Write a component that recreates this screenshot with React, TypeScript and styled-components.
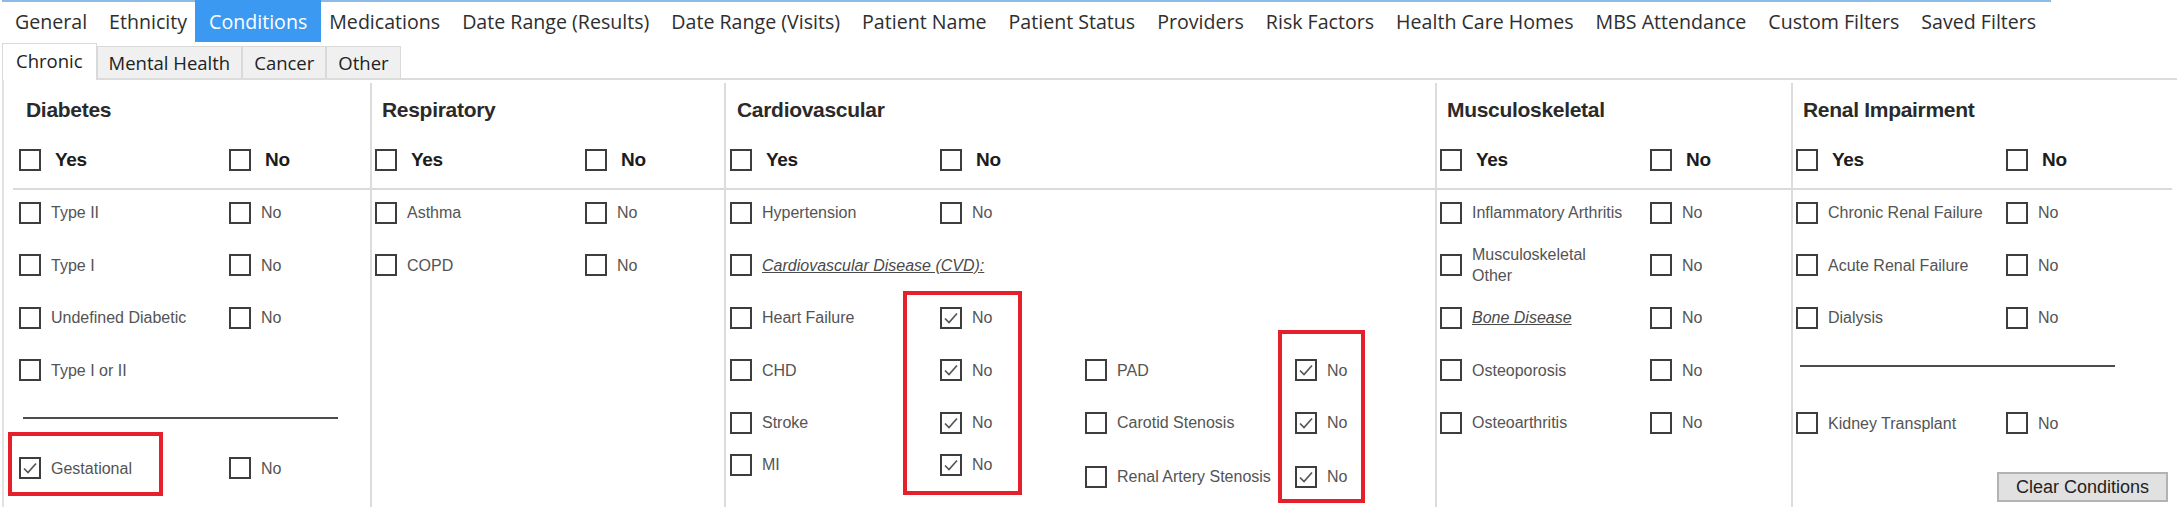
import React from 'react';
import styled, { createGlobalStyle } from 'styled-components';

const GlobalStyle = createGlobalStyle`
  html, body {
    margin: 0;
    padding: 0;
    background: #fff;
  }
  * {
    box-sizing: border-box;
  }
`;

const Screen = styled.div`
  width: 2177px;
  height: 507px;
  overflow: hidden;
  background: #fff;
  padding-left: 2px;
  font-family: 'Liberation Sans', Arial, sans-serif;
`;

const TopTabs = styled.div`
  display: flex;
  width: 2049px;
  height: 42px;
  padding-left: 2px;
  border-top: 2px solid #8cbbe8;
  font-family: 'Open Sans', 'Noto Sans', sans-serif;
  font-size: 19.6px;
  color: #2e2e2e;
`;

const TopTab = styled.div<{ $active?: boolean }>`
  flex: none;
  padding: 0 11px;
  line-height: 40px;
  white-space: nowrap;
  ${({ $active }) =>
    $active &&
    `
    background: #3b99f2;
    color: #fff;
    margin: -2px -3px 0;
    padding: 2px 14px 0;
    height: 42px;
  `}
`;

const SubTabs = styled.div`
  display: flex;
  align-items: flex-end;
  height: 36px;
  font-family: 'Open Sans', 'Noto Sans', sans-serif;
  font-size: 18.5px;
  color: #222;
`;

const SubTab = styled.div<{ $active?: boolean }>`
  position: relative;
  z-index: 1;
  height: ${({ $active }) => ($active ? '37px' : '32px')};
  margin-bottom: ${({ $active }) => ($active ? '-2px' : '0')};
  padding: 0 ${({ $active }) => ($active ? '13px' : '11px')};
  line-height: ${({ $active }) => ($active ? '34px' : '31px')};
  border: 1px solid #d9d9d9;
  border-bottom: none;
  background: ${({ $active }) => ($active ? '#fff' : '#f0f0f0')};
  white-space: nowrap;
`;

const TabPage = styled.div`
  display: flex;
  height: 430px;
  padding-top: 3px;
  border-top: 2px solid #dcdcdc;
  border-left: 2px solid #e2e2e2;
`;

const Panel = styled.section<{ $width?: number; $inset: number; $first?: boolean }>`
  --inset: ${({ $inset }) => $inset}px;
  position: relative;
  display: flex;
  flex-direction: column;
  min-width: 0;
  ${({ $width }) => ($width ? `width: ${$width}px; flex: none;` : 'flex: 1;')}
  border-left: ${({ $first }) => ($first ? 'none' : '2px solid #dcdcdc')};
`;

const Heading = styled.div`
  height: 48px;
  padding: 6px 0 0 calc(var(--inset) + 7px);
  line-height: 42px;
  font-weight: bold;
  font-size: 21px;
  letter-spacing: -0.3px;
  color: #2a2a2a;
  white-space: nowrap;
`;

const YesNoRow = styled.div<{ $lineStart?: number; $lineEnd?: number }>`
  display: flex;
  align-items: center;
  height: 59px;
  margin-left: ${({ $lineStart = 0 }) => $lineStart}px;
  margin-right: ${({ $lineEnd = 0 }) => $lineEnd}px;
  padding-left: calc(var(--inset) - ${({ $lineStart = 0 }) => $lineStart}px);
  border-bottom: 2px solid #dadada;
`;

const HeaderOption = styled.label<{ $wide?: boolean }>`
  display: flex;
  align-items: center;
  flex: none;
  gap: 14px;
  width: ${({ $wide }) => ($wide ? '210px' : 'auto')};
  font-weight: bold;
  font-size: 19px;
  letter-spacing: -0.3px;
  color: #1c1c1c;
`;

const Row = styled.div<{ $h?: number }>`
  display: flex;
  align-items: flex-start;
  height: ${({ $h = 52.5 }) => $h}px;
  padding-left: var(--inset);
  flex: none;
`;

const Option = styled.label<{ $wide?: boolean }>`
  display: flex;
  align-items: center;
  flex: none;
  gap: 10px;
  width: ${({ $wide }) => ($wide ? '210px' : 'auto')};
  height: 45px;
  font-size: 16px;
  line-height: 21px;
  color: #545454;
  white-space: nowrap;
`;

const LinkText = styled.span`
  font-style: italic;
  text-decoration: underline;
  color: #4a4a4a;
`;

const Box = styled.span`
  display: grid;
  place-items: center;
  flex: none;
  width: 22px;
  height: 22px;
  border: 2px solid #3d3d3d;
  background: #fff;
`;

const Divider = styled.div<{ $left: number; $top: number; $bottom: number }>`
  width: 315px;
  height: 2px;
  flex: none;
  background: #4c4c4c;
  margin: ${({ $top, $bottom, $left }) => `${$top}px 0 ${$bottom}px ${$left}px`};
`;

const SubColumns = styled.div`
  display: flex;
`;

const SubColumn = styled.div<{ $width?: number }>`
  display: flex;
  flex-direction: column;
  ${({ $width }) => ($width ? `width: ${$width}px; flex: none;` : 'flex: 1;')}
`;

const Highlight = styled.div<{ $x: number; $y: number; $w: number; $h: number }>`
  position: absolute;
  left: ${({ $x }) => $x}px;
  top: ${({ $y }) => $y}px;
  width: ${({ $w }) => $w}px;
  height: ${({ $h }) => $h}px;
  border: 4px solid #e3202b;
  pointer-events: none;
`;

const ClearButton = styled.button`
  align-self: flex-end;
  flex: none;
  width: 171px;
  height: 30px;
  margin: 19px 9px 0 0;
  padding: 0;
  background: #e1e1e1;
  border: 2px solid #b3b3b3;
  font-family: 'Liberation Sans', Arial, sans-serif;
  font-size: 18px;
  color: #222;
  white-space: nowrap;
`;

const Check = ({ checked }: { checked?: boolean }) => (
  <Box>
    {checked && (
      <svg width="18" height="18" viewBox="0 0 18 18">
        <polyline points="3,9.5 7,13.5 15,4.5" fill="none" stroke="#555" strokeWidth="1.7" />
      </svg>
    )}
  </Box>
);

interface IItem {
  label: React.ReactNode;
  yes?: boolean;
  no?: boolean;
  hideNo?: boolean;
  h?: number;
}

const Item = ({ label, yes, no, hideNo, h }: IItem) => (
  <Row $h={h}>
    <Option $wide>
      <Check checked={yes} />
      <span>{label}</span>
    </Option>
    {!hideNo && (
      <Option>
        <Check checked={no} />
        <span>No</span>
      </Option>
    )}
  </Row>
);

const Header = ({ title, lineStart, lineEnd }: { title: string; lineStart?: number; lineEnd?: number }) => (
  <>
    <Heading>{title}</Heading>
    <YesNoRow $lineStart={lineStart} $lineEnd={lineEnd}>
      <HeaderOption $wide>
        <Check />
        Yes
      </HeaderOption>
      <HeaderOption>
        <Check />
        No
      </HeaderOption>
    </YesNoRow>
  </>
);

const topTabs = [
  'General',
  'Ethnicity',
  'Conditions',
  'Medications',
  'Date Range (Results)',
  'Date Range (Visits)',
  'Patient Name',
  'Patient Status',
  'Providers',
  'Risk Factors',
  'Health Care Homes',
  'MBS Attendance',
  'Custom Filters',
  'Saved Filters',
];

const subTabs = ['Chronic', 'Mental Health', 'Cancer', 'Other'];

const App = () => (
  <>
    <GlobalStyle />
    <Screen>
      <TopTabs>
        {topTabs.map((t) => (
          <TopTab key={t} $active={t === 'Conditions'}>
            {t}
          </TopTab>
        ))}
      </TopTabs>
      <SubTabs>
        {subTabs.map((t) => (
          <SubTab key={t} $active={t === 'Chronic'}>
            {t}
          </SubTab>
        ))}
      </SubTabs>
      <TabPage>
        <Panel $first $width={366} $inset={15}>
          <Header title="Diabetes" lineStart={9} />
          <Item label="Type II" />
          <Item label="Type I" />
          <Item label="Undefined Diabetic" />
          <Item label="Type I or II" hideNo />
          <Divider $left={19} $top={17} $bottom={26.5} />
          <Item label="Gestational" yes />
          <Highlight $x={4} $y={349} $w={155} $h={64} />
        </Panel>

        <Panel $width={354} $inset={3}>
          <Header title="Respiratory" />
          <Item label="Asthma" />
          <Item label="COPD" />
        </Panel>

        <Panel $width={711} $inset={4}>
          <Header title="Cardiovascular" />
          <Item label="Hypertension" />
          <Item label={<LinkText>Cardiovascular Disease (CVD):</LinkText>} hideNo />
          <SubColumns>
            <SubColumn $width={355}>
              <Item label="Heart Failure" no />
              <Item label="CHD" no />
              <Item label="Stroke" no h={42} />
              <Item label="MI" no />
            </SubColumn>
            <SubColumn>
              <Row />
              <Item label="PAD" no />
              <Item label="Carotid Stenosis" no h={54} />
              <Item label="Renal Artery Stenosis" no />
            </SubColumn>
          </SubColumns>
          <Highlight $x={177} $y={208} $w={119} $h={204} />
          <Highlight $x={552} $y={247} $w={87} $h={173} />
        </Panel>

        <Panel $width={356} $inset={3}>
          <Header title="Musculoskeletal" />
          <Item label="Inflammatory Arthritis" />
          <Item
            label={
              <>
                Musculoskeletal
                <br />
                Other
              </>
            }
          />
          <Item label={<LinkText>Bone Disease</LinkText>} />
          <Item label="Osteoporosis" />
          <Item label="Osteoarthritis" />
        </Panel>

        <Panel $inset={3}>
          <Header title="Renal Impairment" lineEnd={5} />
          <Item label="Chronic Renal Failure" />
          <Item label="Acute Renal Failure" />
          <Item label="Dialysis" />
          <Divider $left={7} $top={17.5} $bottom={33.5} />
          <Item label="Kidney Transplant" />
          <ClearButton>Clear Conditions</ClearButton>
        </Panel>
      </TabPage>
    </Screen>
  </>
);

export default App;
